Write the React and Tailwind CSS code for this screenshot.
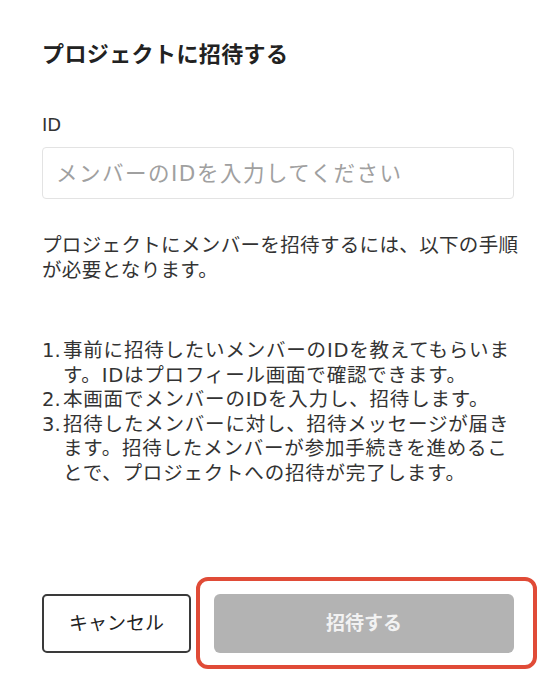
import React from 'react';

const font = { fontFamily: '"DejaVu Sans", "Noto Sans CJK JP", sans-serif' };

const steps = [
  { n: '1.', lines: ['事前に招待したいメンバーのIDを教えてもらいま', 'す。IDはプロフィール画面で確認できます。'] },
  { n: '2.', lines: ['本画面でメンバーのIDを入力し、招待します。'] },
  { n: '3.', lines: ['招待したメンバーに対し、招待メッセージが届き', 'ます。招待したメンバーが参加手続きを進めるこ', 'とで、プロジェクトへの招待が完了します。'] },
];

const App = () => {
  return (
    <div className="w-[547px] h-[684px] bg-white overflow-hidden text-[#333]" style={font}>
      <div className="ml-[42px] w-[472px] pt-[40px] flex flex-col">
        <h2 className="text-[22px] leading-[30px] font-bold text-[#222] tracking-[0.4px]">プロジェクトに招待する</h2>

        <label className="mt-[43px] text-[18px] leading-[24px] text-[#333]">ID</label>
        <input
          type="text"
          placeholder="メンバーのIDを入力してください"
          className="mt-[10px] h-[52px] w-full rounded-[4px] border border-[#e3e3e3] px-[13px] text-[21.5px] tracking-[1.5px] placeholder:text-[#a0a0a0] outline-none"
          style={font}
        />

        <p className="mt-[34px] text-[19.5px] leading-[25px] tracking-[0.35px] whitespace-nowrap text-[#333]">
          プロジェクトにメンバーを招待するには、以下の手順<br />が必要となります。
        </p>

        <ol className="mt-[56px] text-[19.5px] leading-[24.6px] text-[#333] flex flex-col">
          {steps.map(s => (
            <li key={s.n} className="flex">
              <span className="w-[21px] shrink-0">{s.n}</span>
              <span className="whitespace-nowrap tracking-[0.8px]">
                {s.lines.map((l, i) => (
                  <React.Fragment key={i}>{i > 0 && <br />}{l}</React.Fragment>
                ))}
              </span>
            </li>
          ))}
        </ol>

        <div className="mt-[107px] flex gap-[23px]">
          <button className="w-[149px] h-[59px] rounded-[5px] border-2 border-[#3a3a3a] bg-white text-[19px] text-[#222]">
            キャンセル
          </button>
          <div className="relative">
            <button disabled className="w-[300px] h-[59px] rounded-[6px] bg-[#b3b3b3] text-[19px] font-bold text-[#f2f2f2]">
              招待する
            </button>
            {/* highlight annotation */}
            <div className="absolute -left-[18px] -top-[17px] -right-[23px] -bottom-[16px] rounded-[12px] border-4 border-[#e04b37] pointer-events-none" />
          </div>
        </div>
      </div>
    </div>
  );
};

export default App;
